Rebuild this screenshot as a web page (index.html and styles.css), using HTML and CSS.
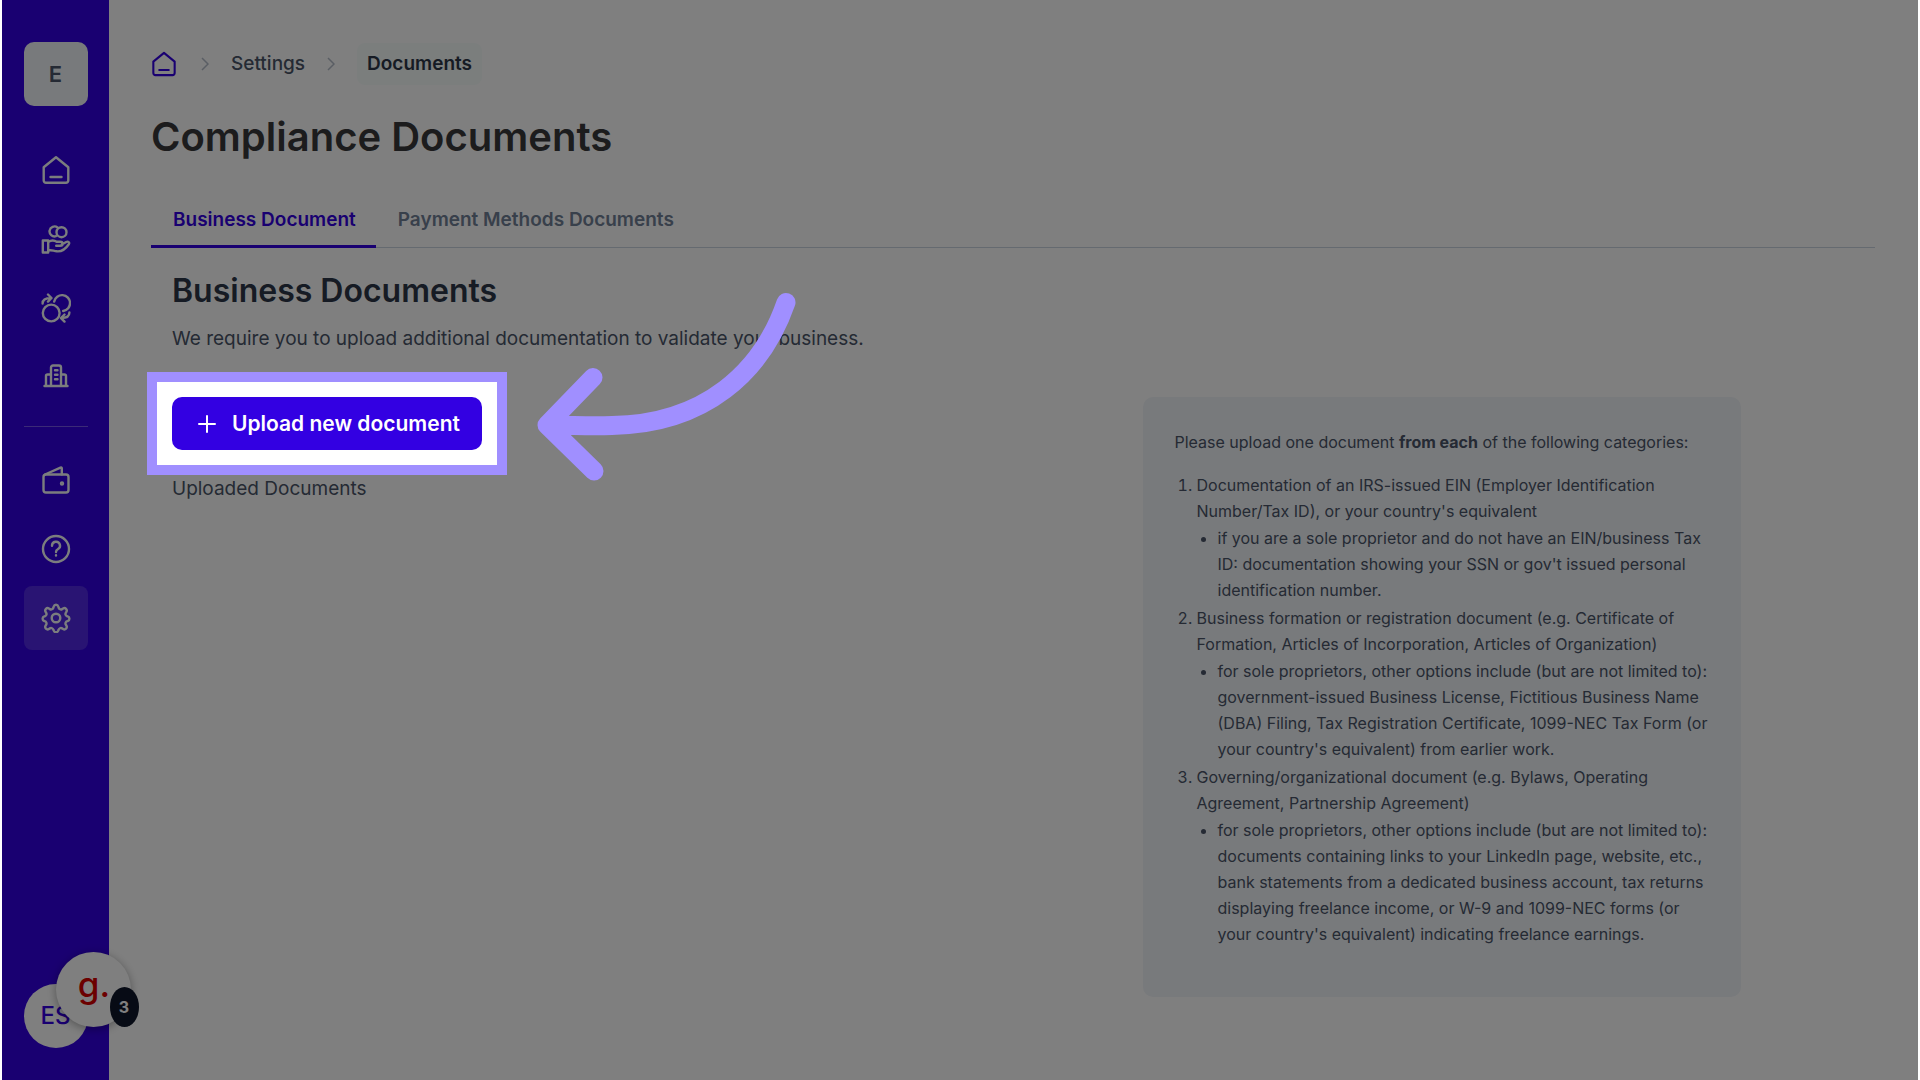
FILE: index.html
```html
<!DOCTYPE html>
<html lang="en">
<head>
<meta charset="utf-8">
<meta name="viewport" content="width=device-width, initial-scale=1">
<title>Compliance Documents</title>
<link rel="stylesheet" href="styles.css">
</head>
<body>
<div class="app">
  <aside class="sidebar">
    <button class="workspace" type="button">E</button>
    <nav class="nav" aria-label="Main">
      <a class="nav-item" href="#" aria-label="Home">
        <svg class="icon" viewBox="0 0 30 30"><path d="M2.700 12.200 15 2.200l12.300 10V25.500a2.300 2.300 0 0 1-2.300 2.300H5a2.300 2.300 0 0 1-2.300-2.300ZM9.500 22h11"/></svg>
      </a>
      <a class="nav-item" href="#" aria-label="Payments">
        <svg class="icon" viewBox="0 0 30 30"><circle cx="20.500" cy="8.200" r="5"/><path d="M16.500 3.400A5 5 0 1 0 15 12.200M1.800 16.500h5.400v12H1.800ZM7.200 18c3-2 6-2 8.500-.2h3.500c3.200 0 3.200 4 0 4h-4M20.800 20.500l4.400-2.500c2-1 3.700.600 2.600 2.200-3.500 5.300-8 7.500-12 7.100-3.500-.300-5.300-1.800-8.600-.800"/></svg>
      </a>
      <a class="nav-item" href="#" aria-label="Exchange">
        <svg class="icon" viewBox="0 0 30 30"><circle cx="10.200" cy="20" r="8.400"/><path d="M13.200 8.500a8 8 0 1 1 9 9.500M1.600 10.500C1.600 6.800 4 5 10 5M7 1.500 10.500 5 7 8.600M28.400 19.500c0 3.700-2.400 5.600-8 5.600M23.500 21.500 20 25.100l3.500 3.500"/></svg>
      </a>
      <a class="nav-item" href="#" aria-label="Company">
        <svg class="icon" viewBox="0 0 30 30"><path d="M3.500 24h23M5 24V14A1.500 1.500 0 0 1 6.500 12.500H10M25 24V14a1.500 1.500 0 0 0-1.500-1.500H20M10 24V5.500a2 2 0 0 1 2-2h6a2 2 0 0 1 2 2V24M14 8.200h2.500M14 12.700h2.500M14 17.200h2.500"/></svg>
      </a>
      <hr class="nav-divider">
      <a class="nav-item" href="#" aria-label="Wallet">
        <svg class="icon" viewBox="0 0 30 30"><rect x="2.500" y="9.500" width="25" height="18" rx="2.500"/><path d="M4 9.500 19.500 2.600c.700-.300 1.300 0 1.300.800v6"/><circle cx="21" cy="18.500" r="1" /></svg>
      </a>
      <a class="nav-item" href="#" aria-label="Help">
        <svg class="icon" viewBox="0 0 30 30"><circle cx="15" cy="15" r="13"/><path d="M11 11.800a4 4 0 1 1 5.800 3.500c-1.300.700-1.800 1.200-1.800 2.700M15 21.300v.200"/></svg>
      </a>
      <a class="nav-item nav-item-active" href="#" aria-label="Settings" aria-current="page">
        <svg class="icon" viewBox="0 0 30 30"><circle cx="15" cy="15" r="4.300"/><path d="M12.700 3.500a2.400 2.400 0 0 1 4.600 0l.300 1.200a2.400 2.400 0 0 0 3.500 1.400l1-.600a2.400 2.400 0 0 1 3.300 3.300l-.600 1a2.400 2.400 0 0 0 1.400 3.500l.500.100a2.400 2.400 0 0 1 0 4.600l-.500.200a2.400 2.400 0 0 0-1.400 3.500l.600 1a2.400 2.400 0 0 1-3.300 3.300l-1-.600a2.400 2.400 0 0 0-3.500 1.400l-.300.700a2.400 2.400 0 0 1-4.600 0l-.300-.700a2.400 2.400 0 0 0-3.500-1.400l-1 .600a2.400 2.400 0 0 1-3.300-3.300l.600-1a2.400 2.400 0 0 0-1.400-3.500l-.500-.200a2.400 2.400 0 0 1 0-4.600l.500-.100a2.400 2.400 0 0 0 1.400-3.500l-.600-1a2.400 2.400 0 0 1 3.300-3.300l1 .600a2.400 2.400 0 0 0 3.500-1.400Z"/></svg>
      </a>
    </nav>
    <div class="account">
      <button class="avatar" type="button">ES</button>
      <button class="widget" type="button" aria-label="Open widget"><span class="widget-logo">g.</span><span class="widget-count">3</span></button>
    </div>
  </aside>

  <main class="main">
    <nav class="breadcrumb" aria-label="Breadcrumb">
      <a class="crumb-home" href="#" aria-label="Home"><svg class="icon icon-small" viewBox="0 0 30 30"><path d="M2.700 12.200 15 2.200l12.300 10V25.500a2.300 2.300 0 0 1-2.300 2.300H5a2.300 2.300 0 0 1-2.300-2.300ZM9.500 22h11"/></svg></a>
      <svg class="chevron" viewBox="0 0 8 14"><path d="m1 1 6 6-6 6"/></svg>
      <a class="crumb" href="#">Settings</a>
      <svg class="chevron" viewBox="0 0 8 14"><path d="m1 1 6 6-6 6"/></svg>
      <a class="crumb crumb-current" href="#" aria-current="page">Documents</a>
    </nav>
    <h1 class="title">Compliance Documents</h1>
    <div class="tabs" role="tablist">
      <button class="tab tab-active" type="button" role="tab" aria-selected="true">Business Document</button>
      <button class="tab" type="button" role="tab" aria-selected="false">Payment Methods Documents</button>
    </div>
    <section class="panel">
      <h2 class="heading">Business Documents</h2>
      <p class="lead">We require you to upload additional documentation to validate your business.</p>
      <div class="columns">
        <div class="uploads">
          <div class="spotlight">
            <button class="upload" type="button">
              <svg class="plus" viewBox="0 0 18 18"><path d="M9 1v16M1 9h16"/></svg>
              <span>Upload new document</span>
            </button>
            <svg class="arrow" viewBox="0 0 260 190"><path d="M249 14.500C225 84 168 136 75 137.500C55 138 32 137.500 10 137M56 89.500 10 137 57 183"/></svg>
          </div>
          <h3 class="subheading">Uploaded Documents</h3>
        </div>
        <div class="card">
          <p class="card-intro">Please upload one document <strong>from each</strong> of the following categories:</p>
          <ol class="categories">
            <li>Documentation of an IRS-issued EIN (Employer Identification Number/Tax ID), or your country's equivalent
              <ul><li>if you are a sole proprietor and do not have an EIN/business Tax ID: documentation showing your SSN or gov't issued personal identification number.</li></ul>
            </li>
            <li>Business formation or registration document (e.g. Certificate of Formation, Articles of Incorporation, Articles of Organization)
              <ul><li>for sole proprietors, other options include (but are not limited to): government-issued Business License, Fictitious Business Name (DBA) Filing, Tax Registration Certificate, 1099-NEC Tax Form (or your country's equivalent) from earlier work.</li></ul>
            </li>
            <li>Governing/organizational document (e.g. Bylaws, Operating Agreement, Partnership Agreement)
              <ul><li>for sole proprietors, other options include (but are not limited to): documents containing links to your LinkedIn page, website, etc., bank statements from a dedicated business account, tax returns displaying freelance income, or W-9 and 1099-NEC forms (or your country's equivalent) indicating freelance earnings.</li></ul>
            </li>
          </ol>
        </div>
      </div>
    </section>
  </main>
</div>
</body>
</html>
```

FILE: styles.css
```css
* { box-sizing: border-box; margin: 0; padding: 0; }

body {
  background: #fff;
  color: #4a5568;
  font-family: Inter, "Liberation Sans", sans-serif;
  font-size: 19px;
  line-height: 28px;
}

button { border: 0; background: none; font: inherit; color: inherit; cursor: pointer; }
a { color: inherit; text-decoration: none; }

.app {
  position: relative;
  display: flex;
  min-height: 100vh;
  margin: 0 2px;
  background: #fff;
  overflow: hidden;
}

/* Sidebar */
.sidebar {
  flex: none;
  display: flex;
  flex-direction: column;
  align-items: center;
  width: 107px;
  padding: 42px 0 32px;
  background: #3300e2;
}

.workspace {
  width: 64px;
  height: 64px;
  border-radius: 10px;
  background: #f1f4f8;
  font-size: 22px;
  font-weight: 600;
}

.nav { display: flex; flex-direction: column; gap: 5px; margin-top: 32px; }

.nav-item {
  display: grid;
  place-items: center;
  width: 64px;
  height: 64px;
  border-radius: 8px;
  color: #f7fafc;
}

.nav-item-active { background: #5229e6; }

.nav-divider { height: 1px; margin: 12px 0 16px; border: 0; background: #7654ee; }

.icon {
  width: 30px;
  height: 30px;
  fill: none;
  stroke: currentColor;
  stroke-width: 2.4;
  stroke-linecap: round;
  stroke-linejoin: round;
}

.icon-small { display: block; width: 26px; height: 26px; }

.account { position: relative; margin-top: auto; }

.avatar {
  display: block;
  width: 64px;
  height: 64px;
  border-radius: 50%;
  background: #fff;
  color: #3300e2;
  font-size: 24px;
  font-weight: 500;
}

.widget {
  position: absolute;
  left: 32px;
  bottom: 21px;
  width: 75px;
  height: 75px;
  padding: 0 0 4px 2px;
  border-radius: 50%;
  background: #fff;
  box-shadow: 0 2px 10px rgba(0, 0, 0, .35);
}

.widget-logo { color: #d80000; font-size: 35px; font-weight: 500; }

.widget-count {
  position: absolute;
  right: -8px;
  bottom: 0;
  width: 29px;
  height: 40px;
  border-radius: 50%;
  background: #0f172a;
  color: #fff;
  font-size: 16px;
  font-weight: 700;
  line-height: 40px;
}

/* Main */
.main { flex: 1; min-width: 0; padding: 43px 43px 40px 42px; }

.breadcrumb { display: flex; align-items: center; height: 42px; font-weight: 500; }
.crumb-home { color: #3300e2; }
.chevron { width: 8px; height: 14px; margin: 0 22px 0 24px; fill: none; stroke: #b4bcc8; stroke-width: 1.5; }
.crumb + .chevron { margin: 0 22px 0 22px; }

.crumb-current {
  padding: 7px 10px;
  border-radius: 8px;
  background: #f7fcfb;
  color: #2d3748;
  font-weight: 600;
}

.title { margin-top: 24px; color: #38383a; font-size: 40px; font-weight: 600; line-height: 56px; }

.tabs { display: flex; margin-top: 27px; border-bottom: 1px solid #cbd5e0; }

.tab {
  height: 56px;
  margin-bottom: -1px;
  padding: 2px 20px 0 22px;
  border-bottom: 3px solid transparent;
  color: #718096;
  font-weight: 600;
}

.tab-active { border-color: #3300e2; color: #3300e2; }

.panel { padding: 22px 21px 0; }
.heading { color: #2d3748; font-size: 32px; font-weight: 600; line-height: 42px; }
.lead { margin-top: 13px; }

.columns {
  display: grid;
  grid-template-columns: 1fr 1fr;
  gap: 32px;
  align-items: start;
  margin-top: 44px;
}

.uploads { display: flex; flex-direction: column; align-items: flex-start; gap: 25px; }
.subheading { font-size: 19px; font-weight: 400; }

/* Guided step: dims the page around the button */
.spotlight { position: relative; z-index: 10; }

.spotlight::after {
  content: "";
  position: absolute;
  inset: -25px;
  border: 10px solid #a08fff;
  box-shadow: 0 0 0 3000px rgba(0, 0, 0, .5);
  pointer-events: none;
}

.upload {
  display: flex;
  align-items: center;
  gap: 16px;
  height: 53px;
  padding: 0 22px 0 26px;
  border-radius: 10px;
  background: #3300e2;
  color: #fff;
  font-size: 21px;
  font-weight: 600;
}

.plus { width: 18px; height: 18px; fill: none; stroke: currentColor; stroke-width: 2; stroke-linecap: round; }

.arrow {
  position: absolute;
  z-index: 1;
  top: -109px;
  left: 365px;
  width: 260px;
  height: 190px;
  overflow: visible;
  fill: none;
  stroke: #a08fff;
  stroke-width: 19;
  stroke-linecap: round;
  stroke-linejoin: round;
  pointer-events: none;
}

.card {
  justify-self: center;
  width: 100%;
  max-width: 598px;
  padding: 32px 32px 50px;
  border-radius: 10px;
  background: #f1f4f8;
  font-size: 16px;
  line-height: 26px;
}

.card strong { font-weight: 700; }
.categories { margin-top: 17px; padding-left: 22px; }
.categories > li + li { margin-top: 2px; }
.categories ul { margin-top: 1px; padding-left: 21px; list-style: disc; }
```
